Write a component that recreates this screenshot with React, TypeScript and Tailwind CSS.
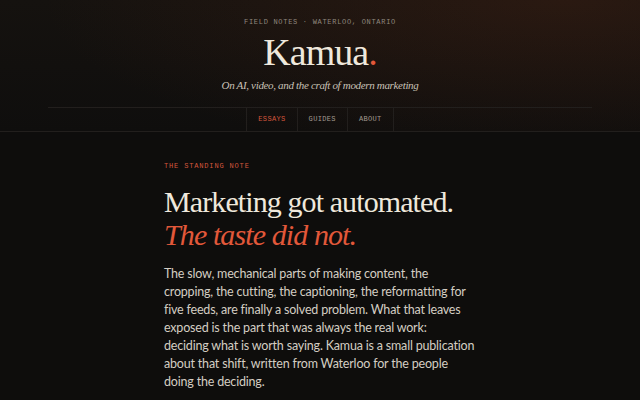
import React from "react";

const mono = "font-['Liberation_Mono','DejaVu_Sans_Mono',monospace]";
const serif = "font-['Liberation_Serif','Times_New_Roman',serif]";
const sans = "font-['Lato','Inter',sans-serif]";

export default function App() {
  return (
    <div className="relative min-h-[400px] w-full overflow-hidden bg-[#0e0d0c] text-[#ece6dc]">
      <div className="bg-[radial-gradient(ellipse_520px_160px_at_88%_0%,rgba(110,48,24,0.24),transparent),linear-gradient(180deg,#15120f_0%,#0f0e0d_100%)]">
        <header className="mx-auto flex w-[544px] flex-col items-center border-b border-[#221f1d] pb-[14px] pt-[17px]">
          <div className={`${mono} text-[7px] leading-[10px] tracking-[0.1em] text-[#8f877e]`}>
            FIELD NOTES · WATERLOO, ONTARIO
          </div>
          <h1 className={`${serif} mt-[3px] text-[38px] leading-[44px] tracking-[-0.025em] text-[#efe8dc]`}>
            Kamua<span className="text-[#e2583a]">.</span>
          </h1>
          <p className={`${serif} mt-[3px] text-[11px] italic leading-[16px] tracking-[-0.03em] text-[#c9c1b6]`}>
            On AI, video, and the craft of modern marketing
          </p>
        </header>
        <nav className="flex justify-center border-b border-[#221f1d]">
          <div className="flex border-l border-[#221f1d]">
            {[
              { label: "ESSAYS", active: true },
              { label: "GUIDES", active: false },
              { label: "ABOUT", active: false },
            ].map((item) => (
              <a
                key={item.label}
                className={`${mono} flex h-[23px] items-center border-r border-[#221f1d] px-[11px] text-[7px] tracking-[0.05em] ${
                  item.active ? "text-[#d4563c]" : "text-[#a29a90]"
                }`}
              >
                {item.label}
              </a>
            ))}
          </div>
        </nav>
      </div>
      <main className="mx-auto w-[330px] pl-[9px] pt-[29px]">
        <div className={`${mono} text-[7px] leading-[10px] tracking-[0.12em] text-[#d4563c]`}>
          THE STANDING NOTE
        </div>
        <h2 className={`${serif} mt-[14px] text-[30px] leading-[33px] tracking-[-0.03em] text-[#efe8dc]`}>
          Marketing got automated.
          <br />
          <em className="text-[#e2583a]">The taste did not.</em>
        </h2>
        <p className={`${sans} mt-[14px] text-[12.5px] leading-[18px] tracking-[-0.015em] text-[#d4cdc3]`}>
          The slow, mechanical parts of making content, the
          <br />
          cropping, the cutting, the captioning, the reformatting for
          <br />
          five feeds, are finally a solved problem. What that leaves
          <br />
          exposed is the part that was always the real work:
          <br />
          deciding what is worth saying. Kamua is a small publication
          <br />
          about that shift, written from Waterloo for the people
          <br />
          doing the deciding.
        </p>
      </main>
    </div>
  );
}
